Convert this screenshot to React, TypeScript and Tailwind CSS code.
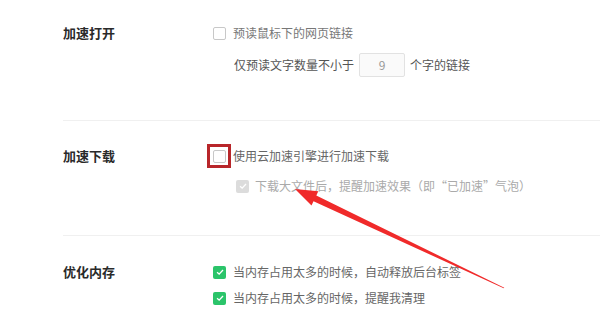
const cjk = { fontFamily: '"Microsoft YaHei", "Noto Sans CJK SC", sans-serif' };

function Box({ state }: { state: "off" | "on" | "disabled" }) {
  if (state === "off") {
    return <span className="inline-block h-[13px] w-[13px] shrink-0 rounded-[2px] border border-[#c8c8c8] bg-white" />;
  }
  const bg = state === "on" ? "bg-[#2bc46a]" : "bg-[#dcdcdc]";
  return (
    <span className={`inline-flex h-[13px] w-[13px] shrink-0 items-center justify-center rounded-[2px] ${bg}`}>
      <svg viewBox="0 0 12 12" className="h-[10px] w-[10px]">
        <path d="M2.5 6.2 L5 8.6 L9.6 3.6" fill="none" stroke="#fff" strokeWidth="1.6" />
      </svg>
    </span>
  );
}

function Section({
  label,
  labelTop,
  children,
  className,
}: {
  label: string;
  labelTop: string;
  children: React.ReactNode;
  className: string;
}) {
  return (
    <div className={`flex ${className}`}>
      <div className={`w-[150px] shrink-0 text-[13px] font-bold leading-5 text-[#2a2a2a] ${labelTop}`}>{label}</div>
      <div className="flex flex-col">{children}</div>
    </div>
  );
}

export default function App() {
  return (
    <div className="relative h-[319px] w-[600px] overflow-hidden bg-white" style={cjk}>
      <div className="ml-[63px] flex flex-col">
        <Section label="加速打开" labelTop="mt-[23px]" className="border-b border-[#f0f0f0] pb-[43px]">
          <div className="mt-[23px] flex h-5 items-center gap-[7px] text-[12px] text-[#777]">
            <Box state="off" />
            <span>预读鼠标下的网页链接</span>
          </div>
          <div className="mt-[10px] ml-[21px] flex h-6 items-center text-[12px] text-[#555]">
            <span>仅预读文字数量不小于</span>
            <span className="mx-[5px] flex h-6 w-[46px] items-center justify-center rounded-[2px] border border-[#e2e2e2] bg-[#fafafa] text-[#999]">
              9
            </span>
            <span>个字的链接</span>
          </div>
        </Section>

        <Section label="加速下载" labelTop="mt-[25px]" className="border-b border-[#f0f0f0] pb-[39px]">
          <div className="mt-[23px] flex h-6 items-center gap-[7px] text-[12px] text-[#666]">
            <span className="relative flex">
              <Box state="off" />
              <span className="absolute -top-[6px] -left-[6px] h-[24px] w-[24px] border-[3px] border-[#b8262a]" />
            </span>
            <span>使用云加速引擎进行加速下载</span>
          </div>
          <div className="mt-2 ml-[23px] flex h-5 items-center gap-[6px] text-[12px] text-[#aaa]">
            <Box state="disabled" />
            <span>下载大文件后，提醒加速效果（即“已加速”气泡）</span>
          </div>
        </Section>

        <Section label="优化内存" labelTop="mt-[26px]" className="">
          <div className="mt-[26px] flex h-5 items-center gap-[7px] text-[12px] text-[#666]">
            <Box state="on" />
            <span>当内存占用太多的时候，自动释放后台标签</span>
          </div>
          <div className="mt-[6px] flex h-5 items-center gap-[7px] text-[12px] text-[#666]">
            <Box state="on" />
            <span>当内存占用太多的时候，提醒我清理</span>
          </div>
        </Section>
      </div>

      <svg className="pointer-events-none absolute inset-0" width="600" height="319" viewBox="0 0 600 319">
        <polygon
          points="295,189 318.3,191.2 316.3,195.6 504.3,287.7 503.7,288.3 313.5,201.2 311.5,205.6"
          fill="#f02a2a"
        />
      </svg>
    </div>
  );
}
